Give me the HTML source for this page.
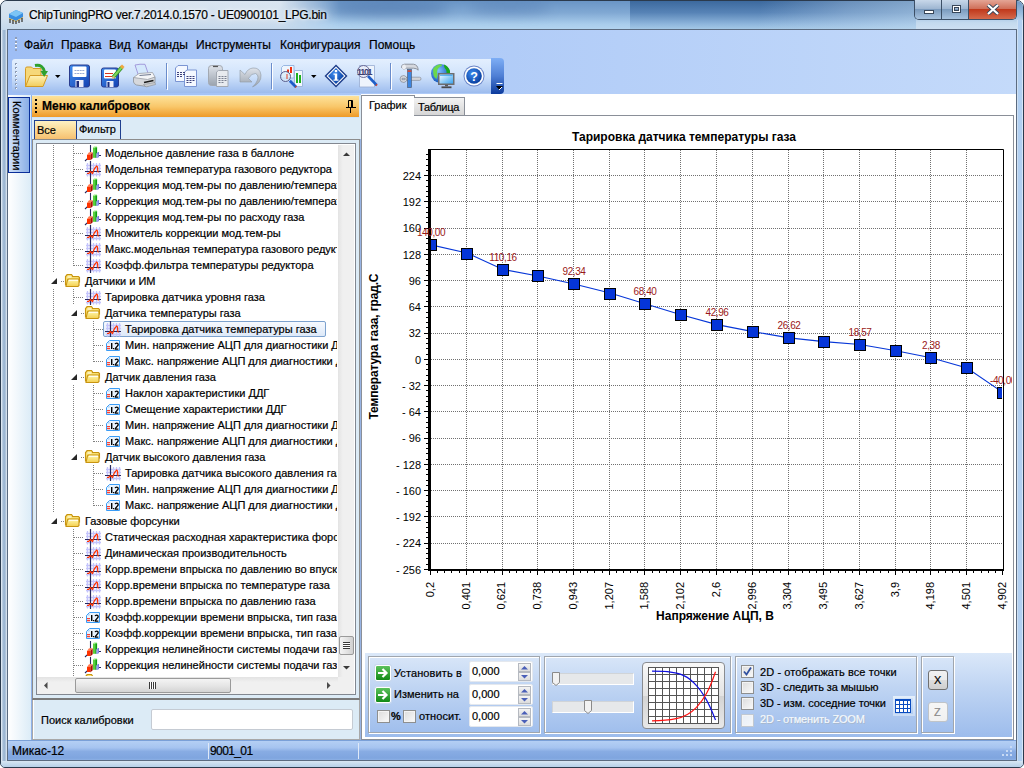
<!DOCTYPE html>
<html><head><meta charset="utf-8">
<style>
*{margin:0;padding:0;box-sizing:border-box}
html,body{width:1024px;height:768px;overflow:hidden;background:#fff}
body{position:relative;font-family:"Liberation Sans",sans-serif;font-size:11px;color:#000}
.a{position:absolute}
.t{position:absolute;white-space:nowrap;line-height:1;-webkit-text-stroke:0.2px currentColor}
</style></head><body>
<!-- window frame -->
<div class="a" style="left:0;top:0;width:1024px;height:768px;background:#bcd3ea;border:1px solid #2b3a4d;border-radius:7px 7px 5px 5px;overflow:hidden"></div>
<div class="a" style="left:1px;top:1px;width:1022px;height:29px;border-radius:6px 6px 0 0;background:linear-gradient(180deg,#dae5f0 0,#d2e0ee 60%,#c4d8ec 100%)"></div>
<div class="a" style="left:280px;top:1px;width:360px;height:29px;background:linear-gradient(180deg,#6a95c6 0,#80a8d3 40%,#a9cdec 80%,#b4d5f0 100%);-webkit-mask-image:linear-gradient(90deg,transparent 0,#000 60px);mask-image:linear-gradient(90deg,transparent 0,#000 60px)"></div>
<div class="a" style="left:330px;top:1px;width:120px;height:16px;border-radius:50%;background:rgba(50,90,150,.35);filter:blur(6px)"></div>
<div class="a" style="left:470px;top:1px;width:80px;height:14px;border-radius:50%;background:rgba(60,100,160,.25);filter:blur(6px)"></div>
<div class="a" style="left:630px;top:1px;width:286px;height:29px;background:linear-gradient(180deg,#3c699e 0,#5783b6 40%,#8fb6dc 80%,#a8cbe8 100%)"></div>
<div class="a" style="left:630px;top:1px;width:286px;height:29px;background:linear-gradient(100deg,rgba(255,255,255,0) 0,rgba(255,255,255,0) 45%,rgba(190,215,240,.35) 75%,rgba(200,225,245,.5) 100%)"></div>
<div class="a" style="left:916px;top:1px;width:107px;height:29px;border-radius:0 6px 0 0;background:linear-gradient(180deg,#6f97c4 0,#9dbfe0 45%,#c4daee 75%,#cfe1f2 100%)"></div>
<div class="a" style="left:1px;top:30px;width:6px;height:731px;background:linear-gradient(90deg,#eef4fa 0,#a4bcd6 35%,#9cb6d2 65%,#e6eef6 100%)"></div>
<div class="a" style="left:1017px;top:20px;width:6px;height:741px;background:linear-gradient(90deg,#dce8f4,#b2d0f2 25%,#b2d0f2 80%,#eef6fd)"></div>
<div class="a" style="left:1px;top:761px;width:1022px;height:6px;border-radius:0 0 4px 4px;background:linear-gradient(180deg,#d8e6f3,#c6dbee 50%,#b8d0e8)"></div>
<!-- app icon -->
<svg class="a" style="left:7px;top:8px" width="18" height="16" viewBox="0 0 18 16">
<path d="M2 6 L9 2 L16 5 L16 9 L9 13 L2 10 Z" fill="#3a8ee0"/>
<path d="M2 6 L9 2 L16 5 L9 9 Z" fill="#7cc4f5"/>
<path d="M2 10 L9 13 L16 9 L16 10 L9 14 L2 11Z" fill="#e9b23a"/>
<path d="M3 11v4M6 12v4M9 13v3M12 12v3M15 10v4" stroke="#3b3b3b" stroke-width="1.3"/>
</svg>
<div class="t" style="left:29px;top:9px;font-size:12px;color:#000;letter-spacing:-0.25px;text-shadow:0 0 6px #fff,0 0 3px #fff">ChipTuningPRO ver.7.2014.0.1570 - UE0900101_LPG.bin</div>
<!-- caption buttons -->
<div class="a" style="left:914px;top:0;width:103px;height:20px;border:1px solid #3c4f66;border-top:none;border-radius:0 0 5px 5px;overflow:hidden">
 <div class="a" style="left:0;top:0;width:27px;height:19px;background:linear-gradient(180deg,#c8d8ea 0,#9fb7d2 45%,#7b9bbe 50%,#a8c3df 100%);border-right:1px solid #3c4f66"></div>
 <div class="a" style="left:27px;top:0;width:27px;height:19px;background:linear-gradient(180deg,#c8d8ea 0,#9fb7d2 45%,#7b9bbe 50%,#a8c3df 100%);border-right:1px solid #3c4f66"></div>
 <div class="a" style="left:54px;top:0;width:48px;height:19px;background:linear-gradient(180deg,#e4a595 0,#d0705a 45%,#c0391c 50%,#d56a4c 100%)"></div>
 <div class="a" style="left:9px;top:10px;width:10px;height:4px;background:#fff;border:1px solid #39475a"></div>
 <div class="a" style="left:37px;top:5px;width:9px;height:8px;background:transparent;border:1px solid #39475a;box-shadow:inset 0 0 0 1px #fff, inset 0 0 0 2px #39475a"></div>
 <svg class="a" style="left:71px;top:4px" width="14" height="11" viewBox="0 0 14 11"><path d="M2 1 L12 10 M12 1 L2 10" stroke="#39475a" stroke-width="4"/><path d="M2 1 L12 10 M12 1 L2 10" stroke="#fff" stroke-width="2.2"/></svg>
</div>
<!-- client -->
<div class="a" style="left:7px;top:29px;width:1010px;height:732px;border:1px solid #5b6b80;background:#dfecf7"></div>
<!-- menu+toolbar panel -->
<div class="a" style="left:8px;top:30px;width:1008px;height:65px;background:linear-gradient(90deg,#9ebef5,#c4dafa)"></div>
<div class="a" style="left:15px;top:37px;width:2px;height:14px;background:repeating-linear-gradient(180deg,#8e9db8 0,#8e9db8 2px,#fff 2px,#fff 3px,transparent 3px,transparent 4px)"></div>
<div class="t" style="left:24px;top:39px;font-size:12px">Файл</div>
<div class="t" style="left:61px;top:39px;font-size:12px">Правка</div>
<div class="t" style="left:109px;top:39px;font-size:12px">Вид</div>
<div class="t" style="left:137px;top:39px;font-size:12px">Команды</div>
<div class="t" style="left:196px;top:39px;font-size:12px">Инструменты</div>
<div class="t" style="left:280px;top:39px;font-size:12px">Конфигурация</div>
<div class="t" style="left:369px;top:39px;font-size:12px">Помощь</div>
<svg class="a" style="left:0;top:0" width="520" height="100" viewBox="0 0 520 100">
<defs>
<linearGradient id="tbg" x1="0" y1="0" x2="0" y2="1"><stop offset="0" stop-color="#e3effe"/><stop offset=".5" stop-color="#cfe2fb"/><stop offset="1" stop-color="#9dbcee"/></linearGradient>
<linearGradient id="ovg" x1="0" y1="0" x2="0" y2="1"><stop offset="0" stop-color="#7eaef5"/><stop offset=".5" stop-color="#4f7fd5"/><stop offset="1" stop-color="#0b3a9c"/></linearGradient>
<linearGradient id="flp" x1="0" y1="0" x2="1" y2="1"><stop offset="0" stop-color="#3f8ef0"/><stop offset="1" stop-color="#1440b0"/></linearGradient>
<linearGradient id="fold" x1="0" y1="0" x2="0" y2="1"><stop offset="0" stop-color="#fff3b8"/><stop offset="1" stop-color="#f2cd5c"/></linearGradient>
<linearGradient id="gray" x1="0" y1="0" x2="0" y2="1"><stop offset="0" stop-color="#dfe3ea"/><stop offset="1" stop-color="#9aa3ae"/></linearGradient>
<radialGradient id="hb" cx=".4" cy=".35" r=".7"><stop offset="0" stop-color="#3c8cf0"/><stop offset="1" stop-color="#063a9a"/></radialGradient>
<radialGradient id="gl" cx=".4" cy=".35" r=".7"><stop offset="0" stop-color="#7fc0ff"/><stop offset="1" stop-color="#0b4fb5"/></radialGradient>
</defs>
<rect x="12" y="59" width="482" height="34" rx="3" fill="url(#tbg)"/>
<path d="M491 58 H500 Q504 58 504 62 V90 Q504 94 500 94 H491 Z" fill="url(#ovg)"/>
<path d="M496.5 83.5h6" stroke="#fff" stroke-width="1"/><path d="M496 86h7l-3.5 4z" fill="#000"/><path d="M499 90l3-3" stroke="#fff" stroke-width="1"/>
<g fill="#8c9bb5"><rect x="15" y="63" width="2" height="2"/><rect x="15" y="67" width="2" height="2"/><rect x="15" y="71" width="2" height="2"/><rect x="15" y="75" width="2" height="2"/><rect x="15" y="79" width="2" height="2"/><rect x="15" y="83" width="2" height="2"/><rect x="15" y="87" width="2" height="2"/></g>
<g fill="#fff"><rect x="16" y="64" width="1" height="1"/><rect x="16" y="68" width="1" height="1"/><rect x="16" y="72" width="1" height="1"/><rect x="16" y="76" width="1" height="1"/><rect x="16" y="80" width="1" height="1"/><rect x="16" y="84" width="1" height="1"/><rect x="16" y="88" width="1" height="1"/></g>
<!-- open folder -->
<path d="M25.5 86.5 V68.5 Q25.5 67 27 67 H31.5 L33 68.5 H41 V75 Z" fill="#f6d87a" stroke="#d49b25" stroke-width="1"/>
<path d="M25.5 86.5 L30 75.5 H47.5 L43 86.5 Z" fill="url(#fold)" stroke="#d49b25" stroke-width="1"/>
<path d="M35 65.5 Q43 64 44.5 72" fill="none" stroke="#2fa12f" stroke-width="3"/>
<path d="M40.5 71 H48 L44.2 77 Z" fill="#2fa12f"/>
<path d="M55 75 h5.5 l-2.75 3 z" fill="#000"/>
<!-- save -->
<rect x="69.5" y="65" width="20" height="22" rx="2" fill="url(#flp)" stroke="#2a3c8e"/>
<rect x="72.5" y="66.5" width="14" height="10.5" rx="1" fill="#fff"/>
<path d="M74.5 70.5h10M74.5 73.5h10" stroke="#7d96cc" stroke-width=".8" stroke-dasharray="2 .6"/>
<rect x="75.5" y="80" width="8" height="7" fill="#eceefa"/><rect x="76.5" y="81" width="2.5" height="6" fill="#1c2c7c"/>
<!-- save edit -->
<rect x="101.5" y="68" width="17" height="19" rx="2" fill="url(#flp)" stroke="#2a3c8e"/>
<rect x="104" y="69.5" width="12" height="9" rx="1" fill="#fff"/>
<path d="M105 73.5h8M105 76.5h8" stroke="#d8341c" stroke-width="1.2"/>
<rect x="106.5" y="81" width="7" height="6" fill="#eceefa"/><rect x="107.5" y="82" width="2" height="5" fill="#1c2c7c"/>
<path d="M113 77.5 L122 67" stroke="#2e8f23" stroke-width="3.6"/><path d="M113 77.5 L122 67" stroke="#7fd65a" stroke-width="2"/>
<path d="M121 65.5 l2.5 2.5" stroke="#f0a640" stroke-width="3"/>
<path d="M111.5 79 l1.5-3 2 1.8z" fill="#e8b070"/>
<!-- printer -->
<path d="M135 65 Q140 63.8 145 64.3 L148.5 74.5 L138.5 75.5 Z" fill="#d4e8fc" stroke="#9d92d8" stroke-width=".9"/>
<path d="M133.5 77.5 V82 Q134 84 136.5 85 L147 86.5 L155 82.5 V77 Z" fill="#d6d8dc" stroke="#8c9096" stroke-width=".8"/>
<path d="M133.5 77.5 L139 73.5 L152.5 72.5 L155 77 L147.5 79.5 Z" fill="#f4f5f7" stroke="#9a9ea4" stroke-width=".8"/>
<path d="M139.5 75.5 L151 74.5" stroke="#6f7a90" stroke-width="1"/>
<path d="M144 82.5 L153.5 80.5" stroke="#1a1a1a" stroke-width="1.6"/>
<path d="M143.5 84.5 L155 82.5 L155.5 84.5 L146 87 Z" fill="#c9cbcf" stroke="#8c9096" stroke-width=".6"/>
<!-- separators -->
<path d="M166.5 63v26M271.5 63v26M390.5 63v26" stroke="#6a8ccb" stroke-width="1"/>
<path d="M167.5 64v26M272.5 64v26M391.5 64v26" stroke="#fff" stroke-width="1"/>
<!-- copy -->
<path d="M175.5 81.5 V68 L178 65.5 H187.5 V81.5 Z" fill="#f4f8ff" stroke="#7b95d3"/>
<path d="M184.5 86.5 V72 L187 70 H196.5 V86.5 Z" fill="#f4f8ff" stroke="#7b95d3"/>
<path d="M177 72.5h8M177 74.5h8M177 76.5h6M186.5 76.5h8M186.5 78.5h8M186.5 80.5h8M186.5 82.5h6" stroke="#3a3f7a" stroke-width="1" stroke-dasharray="2 1"/>
<!-- paste gray -->
<rect x="208.5" y="65.5" width="14" height="20" rx="3" fill="url(#gray)" stroke="#a3a9b2"/>
<path d="M213 66.5h5" stroke="#555" stroke-width="1.2"/>
<path d="M216.5 86.5 V72 L218.5 70.5 H228 V86.5 Z" fill="#e8ebef" stroke="#a3a9b2"/>
<path d="M218.5 76.5h8M218.5 78.5h8M218.5 80.5h8M218.5 82.5h6" stroke="#7b8190" stroke-width="1" stroke-dasharray="2 1"/>
<!-- undo gray -->
<path d="M240 70 L240 82 L252 82 L248.5 78.5 Q251.5 73 255.5 73.5 Q259 75 257.5 80 Q256 84 252.5 87 Q261.5 83 261 75 Q260 67.5 253 68 Q247.5 68.5 245 74.5 Z" fill="url(#gray)" stroke="#8f98a3" stroke-width=".6"/>
<!-- chart zoom -->
<path d="M281.5 78 V67.5 L283.5 65.5 H294 V78 Z" fill="#eef5fd" stroke="#8fb0e0" stroke-width=".9"/>
<path d="M288 73v-3.5M291 73v-6" stroke="#f03010" stroke-width="2"/>
<path d="M294.5 86.5 V70.5 H302.5 V86.5 Z" fill="#f2f8fe" stroke="#98b0d8" stroke-width=".9"/>
<path d="M297 83v-10M300 83v-8" stroke="#20b020" stroke-width="2"/>
<circle cx="285.5" cy="76.5" r="5" fill="rgba(215,235,250,.75)" stroke="#5a5c8a" stroke-width="1"/>
<path d="M287 74v5" stroke="#e07060" stroke-width="2" opacity=".7"/>
<path d="M289.8 80.8 L296 87" stroke="#1d5cc8" stroke-width="2.8"/><path d="M295.5 86.5l.8.8" stroke="#d04020" stroke-width="2"/>
<path d="M311 75 h5.5 l-2.75 3 z" fill="#000"/>
<!-- info -->
<path d="M336 64.5 L347.5 76 L336 87.5 L324.5 76 Z" fill="#1d3d8a"/>
<path d="M336 66.5 L345.5 76 L336 85.5 L326.5 76 Z" fill="#fff"/>
<path d="M336 68 L344 76 L336 84 L328 76 Z" fill="url(#hb)"/>
<rect x="334.8" y="70" width="2.4" height="2.2" fill="#fff"/><path d="M333.5 73.5h3.7v6h1.3v1.2h-5v-1.2h1.3v-4.8h-1.3z" fill="#fff"/>
<!-- binary search -->
<path d="M359.5 87 V65.5 H374.5 V87 Z" fill="#eef4fc" stroke="#98acd2" stroke-width=".8"/>
<circle cx="363.5" cy="71.5" r="6" fill="rgba(230,235,248,.85)" stroke="#6a6c98" stroke-width="1"/>
<text x="357" y="75" font-family="Liberation Sans" font-size="9" font-weight="bold" fill="#3d4070" letter-spacing="-1.3">1101</text>
<path d="M368 76 L376.5 85" stroke="#1f5fc8" stroke-width="2.6"/><path d="M376 84.5 l1 1" stroke="#d0412a" stroke-width="2"/>
<!-- tools -->
<path d="M400 79 Q400 75.5 404 75.5 L406.5 77 V81 L404 82.5 Q400 82.5 400 79Z M402 78.3 h3 v1.4 h-3z" fill="#d9dbe0" stroke="#80858f" stroke-width=".7" fill-rule="evenodd"/>
<rect x="406" y="77.2" width="15" height="3.2" rx="1.5" fill="#d2d4da" stroke="#80858f" stroke-width=".6"/>
<rect x="407.6" y="69.5" width="3.8" height="18" fill="#3d86e0" stroke="#4d5d78" stroke-width=".7"/>
<rect x="407.6" y="70.3" width="3.8" height="1.5" fill="#e8401c"/>
<path d="M401.5 67.5 Q401 64.5 404.5 64.2 H413.5 Q418 64.8 418.2 70.2 Q416.5 68.2 413.5 68.2 H406.5 Q403.5 70.5 401.5 67.5Z" fill="#d5d8de" stroke="#7c818b" stroke-width=".8"/>
<ellipse cx="404" cy="67" rx="2" ry="2.6" fill="#eceef2"/>
<!-- globe -->
<circle cx="440.5" cy="73.5" r="9.5" fill="url(#gl)"/>
<path d="M433 69 Q435.5 65 440.5 64.2 Q443 64.3 441.5 66 Q438.5 67 437.5 69.5 Q436.5 72 437.5 75 L436.5 79 Q434 77.5 433.5 75 Z" fill="#6cd84a"/>
<path d="M444 64.6 Q448.5 66.5 450 71 L450 74 L446.5 74 Q447 70 445 68.5 Q444 67 444 64.6Z" fill="#1aa81a"/>
<rect x="438" y="73" width="16.5" height="12" fill="#6e6e70"/>
<linearGradient id="scr" x1="0" y1="0" x2="1" y2="1"><stop offset="0" stop-color="#f4fbff"/><stop offset="1" stop-color="#3aa4f0"/></linearGradient>
<rect x="439.5" y="74.5" width="13.5" height="9" fill="url(#scr)"/>
<path d="M440 75.2h12.5" stroke="#30a0f0" stroke-width="1"/>
<path d="M445 85.5h3" stroke="#5a5a5c" stroke-width="1.5"/><path d="M441.5 87.3h10" stroke="#4a4a4c" stroke-width="1.8"/>
<!-- help -->
<circle cx="474" cy="76" r="10.5" fill="#6b86c8"/>
<circle cx="474" cy="76" r="9.5" fill="#fff"/>
<circle cx="474" cy="76" r="7.8" fill="url(#hb)"/>
<text x="474" y="80.8" font-family="Liberation Sans" font-size="12.5" font-weight="bold" fill="#fff" text-anchor="middle">?</text>
</svg>
<!-- left dock -->
<div class="a" style="left:8px;top:95px;width:23px;height:645px;background:linear-gradient(90deg,#ffffff,#dcecf7)"></div>
<div class="a" style="left:31px;top:95px;width:1px;height:645px;background:#8fb2ea"></div>
<div class="a" style="left:8px;top:97px;width:22px;height:76px;border:1px solid #0a2f9a;background:linear-gradient(90deg,#cfe0f8,#8aaee6)"></div>
<div class="t" style="left:22px;top:101px;font-size:11px;transform-origin:0 0;transform:rotate(90deg);">Комментарии</div>
<div class="a" style="left:32px;top:95px;width:329px;height:645px;background:#dcebf6"></div><div class="a" style="left:32px;top:117px;width:327px;height:1px;background:#cfe5fb"></div>
<div class="a" style="left:32px;top:96px;width:327px;height:21px;background:linear-gradient(180deg,#fde29a 0,#f9c76a 50%,#ee9a27 100%)"></div>
<div class="a" style="left:35px;top:99px;width:2px;height:15px;background:repeating-linear-gradient(180deg,#000 0,#000 2px,transparent 2px,transparent 4px)"></div>
<div class="t" style="left:42px;top:100px;font-size:12px;font-weight:bold">Меню калибровок</div>
<svg class="a" style="left:345px;top:99px" width="12" height="14" viewBox="0 0 12 14"><path d="M3.5 1.5h4v7h-4zM1 8.5h10M5.5 9v5" fill="none" stroke="#000" stroke-width="1"/><path d="M6.5 2v6" stroke="#000" stroke-width="1"/></svg>
<div class="a" style="left:34px;top:120px;width:42px;height:19px;border:1px solid #1f3f8f;border-right:none;border-bottom:none;background:linear-gradient(180deg,#fdf1c4 0,#fbdb96 50%,#f6c070 100%)"></div>
<div class="a" style="left:76px;top:120px;width:45px;height:20px;border:1px solid #1f3f8f;background:#dcebf6"></div>
<div class="t" style="left:37px;top:125px">Все</div>
<div class="t" style="left:79px;top:124px">Фильтр</div>
<div class="a" style="left:32px;top:139px;width:328px;height:561px;border:1px solid #8c8c8c;border-bottom:2px solid #7a7a7a;background:#dcebf6"></div>
<div class="a" style="left:32px;top:700px;width:328px;height:40px;border:1px solid #a8a8a8;border-top:none;box-shadow:inset 1px 0 0 #fff"></div>
<div class="a" style="left:36px;top:143px;width:320px;height:552px;border:1px solid #828790;background:#fff;overflow:hidden">
 <div class="a" style="left:-37px;top:-144px;width:337px;height:676px;overflow:hidden">
  <div class="a" style="left:0;top:0;width:337px;height:676px">
<div class="t" style="left:105px;top:148px">Модельное давление газа в баллоне</div>
<div class="t" style="left:105px;top:164px">Модельная температура газового редуктора</div>
<div class="t" style="left:105px;top:180px">Коррекция мод.тем-ры по давлению/температуре газа</div>
<div class="t" style="left:105px;top:196px">Коррекция мод.тем-ры по давлению/температуре газа</div>
<div class="t" style="left:105px;top:212px">Коррекция мод.тем-ры по расходу газа</div>
<div class="t" style="left:105px;top:228px">Множитель коррекции мод.тем-ры</div>
<div class="t" style="left:105px;top:244px">Макс.модельная температура газового редуктора</div>
<div class="t" style="left:105px;top:260px">Коэфф.фильтра температуры редуктора</div>
<div class="t" style="left:85px;top:276px">Датчики и ИМ</div>
<div class="t" style="left:105px;top:292px">Тарировка датчика уровня газа</div>
<div class="t" style="left:105px;top:308px">Датчика температуры газа</div>
<div class="a" style="left:103px;top:321px;width:223px;height:16px;border:1px solid #7da2ce;border-radius:2px;background:linear-gradient(180deg,#f6f9fe,#dde9f8)"></div>
<div class="t" style="left:125px;top:324px">Тарировка датчика температуры газа</div>
<div class="t" style="left:125px;top:340px">Мин. напряжение АЦП для диагностики ДТГ</div>
<div class="t" style="left:125px;top:356px">Макс. напряжение АЦП для диагностики ДТГ</div>
<div class="t" style="left:105px;top:372px">Датчик давления газа</div>
<div class="t" style="left:125px;top:388px">Наклон характеристики ДДГ</div>
<div class="t" style="left:125px;top:404px">Смещение характеристики ДДГ</div>
<div class="t" style="left:125px;top:420px">Мин. напряжение АЦП для диагностики ДДГ</div>
<div class="t" style="left:125px;top:436px">Макс. напряжение АЦП для диагностики ДДГ</div>
<div class="t" style="left:105px;top:452px">Датчик высокого давления газа</div>
<div class="t" style="left:125px;top:468px">Тарировка датчика высокого давления газа</div>
<div class="t" style="left:125px;top:484px">Мин. напряжение АЦП для диагностики ДВДГ</div>
<div class="t" style="left:125px;top:500px">Макс. напряжение АЦП для диагностики ДВДГ</div>
<div class="t" style="left:85px;top:516px">Газовые форсунки</div>
<div class="t" style="left:105px;top:532px">Статическая расходная характеристика форсунок</div>
<div class="t" style="left:105px;top:548px">Динамическая производительность</div>
<div class="t" style="left:105px;top:564px">Корр.времени впрыска по давлению во впускном коллекторе</div>
<div class="t" style="left:105px;top:580px">Корр.времени впрыска по температуре газа</div>
<div class="t" style="left:105px;top:596px">Корр.времени впрыска по давлению газа</div>
<div class="t" style="left:105px;top:612px">Коэфф.коррекции времени впрыска, тип газа 1</div>
<div class="t" style="left:105px;top:628px">Коэфф.коррекции времени впрыска, тип газа 2</div>
<div class="t" style="left:105px;top:644px">Коррекция нелинейности системы подачи газа</div>
<div class="t" style="left:105px;top:660px">Коррекция нелинейности системы подачи газа</div>
<div class="t" style="left:105px;top:676px">Х</div>
  </div>
  <svg class="a" style="left:0;top:0" width="337" height="676">
<defs>
<symbol id="ib" viewBox="0 0 16 16" width="16" height="16" overflow="visible">
<path d="M4.5 0v7.5M12.5 10.5h2.5M-1 16l2.2-2.2" stroke="#26285e" stroke-width="1.1"/>
<path d="M1 10l2-2.8h3.7l-2.4 2.8z" fill="#ff7a50"/>
<path d="M4.3 10l2.4-2.8v6l-2.4 2.2z" fill="#a80c00"/>
<rect x="1" y="10" width="3.3" height="5" fill="#ff3300"/>
<rect x="7" y="2.5" width="2.2" height="10.3" fill="#5ad23a"/>
<rect x="9.2" y="2" width="1.9" height="10.8" fill="#0ea010"/>
<path d="M7 2.5l1-1h3v1z" fill="#9af080"/>
<path d="M10.5 8.5l1.5-1.5h1v5l-1.5 1h-1z" fill="#7b80e0"/>
<rect x="10.5" y="8.5" width="1" height="4.5" fill="#c0c4ff"/>
</symbol>
<symbol id="ic" viewBox="0 0 16 16" width="16" height="16" overflow="visible">
<path d="M1.5 2v13.5M7.5 2v13.5M10.5 2v13.5M13.5 2v13.5M0 4.5h15M0 7.5h15M0 13.5h15" stroke="#c4c4fc" stroke-width="1.3"/>
<path d="M4.5 0v16M-1 10.5h16" stroke="#262860" stroke-width="1.2"/>
<path d="M1 12.5h1.5l2-2 2 2 1-2.5 1-2.5 1-1 1-1.5 1 1 .3 4.5 .7 1" fill="none" stroke="#ff3300" stroke-width="1.2" stroke-linejoin="round"/>
</symbol>
<symbol id="in" viewBox="0 0 16 16" width="16" height="16" overflow="visible">
<path d="M0.5 6.5l3-3h10v10h-13z" fill="#eaf4fe" stroke="#3a9cf6" stroke-width="1"/>
<path d="M1.5 6.5l2-2v2z" fill="#9cc8f4"/>
<path d="M1 9.7h3M1 11.7h3" stroke="#ff1800" stroke-width="1"/>
<rect x="5" y="6" width="1.4" height="6" fill="#000"/>
<rect x="7" y="11" width="1.2" height="1.2" fill="#000"/>
<path d="M9.1 7.2q.3-1.1 1.5-1.1q1.6 0 1.6 1.5q0 .9-1 1.7l-1.8 2.1v.7h3" fill="none" stroke="#000" stroke-width="1.3"/>
</symbol>
<linearGradient id="fg" x1="0" y1="0" x2="0" y2="1"><stop offset="0" stop-color="#fff8b0"/><stop offset="1" stop-color="#f4d050"/></linearGradient>
<symbol id="if" viewBox="0 0 16 16" width="16" height="16" overflow="visible">
<path d="M0.5 12.5V3.5L2 2V1.5h4.5L7.5 3v.5h6l1 1v5" fill="#f8e070" stroke="#c89410" stroke-width="1.1"/>
<path d="M1 13.5L2.5 7q.3-1 1.5-1h9.5l.5.5v6l-1 1z" fill="url(#fg)" stroke="#c89410" stroke-width="1.1"/>
<path d="M2.5 4h4M4 7.3h9" stroke="#fff" stroke-width="1"/>
</symbol>
</defs>
<path d="M53.5 145V273" stroke="#808080" stroke-dasharray="1 1"/>
<path d="M53.5 289V513" stroke="#808080" stroke-dasharray="1 1"/>
<path d="M73.5 145V266" stroke="#808080" stroke-dasharray="1 1"/>
<path d="M73.5 289V305" stroke="#808080" stroke-dasharray="1 1"/>
<path d="M73.5 321V369" stroke="#808080" stroke-dasharray="1 1"/>
<path d="M73.5 385V449" stroke="#808080" stroke-dasharray="1 1"/>
<path d="M73.5 529V690" stroke="#808080" stroke-dasharray="1 1"/>
<path d="M93.5 321V362" stroke="#808080" stroke-dasharray="1 1"/>
<path d="M93.5 385V442" stroke="#808080" stroke-dasharray="1 1"/>
<path d="M93.5 465V506" stroke="#808080" stroke-dasharray="1 1"/>
<use href="#ib" x="86" y="145"/>
<path d="M74 153.5h10" stroke="#808080" stroke-dasharray="1 1"/>
<use href="#ic" x="86" y="161"/>
<path d="M74 169.5h10" stroke="#808080" stroke-dasharray="1 1"/>
<use href="#ib" x="86" y="177"/>
<path d="M74 185.5h10" stroke="#808080" stroke-dasharray="1 1"/>
<use href="#ib" x="86" y="193"/>
<path d="M74 201.5h10" stroke="#808080" stroke-dasharray="1 1"/>
<use href="#ib" x="86" y="209"/>
<path d="M74 217.5h10" stroke="#808080" stroke-dasharray="1 1"/>
<use href="#ic" x="86" y="225"/>
<path d="M74 233.5h10" stroke="#808080" stroke-dasharray="1 1"/>
<use href="#ic" x="86" y="241"/>
<path d="M74 249.5h10" stroke="#808080" stroke-dasharray="1 1"/>
<use href="#ic" x="86" y="257"/>
<path d="M74 265.5h10" stroke="#808080" stroke-dasharray="1 1"/>
<use href="#if" x="65" y="273"/>
<path d="M57 278v6h-6z" fill="#262626"/>
<path d="M61 281.5h4" stroke="#808080" stroke-dasharray="1 1"/>
<use href="#ic" x="86" y="289"/>
<path d="M74 297.5h10" stroke="#808080" stroke-dasharray="1 1"/>
<use href="#if" x="85" y="305"/>
<path d="M77 310v6h-6z" fill="#262626"/>
<path d="M81 313.5h4" stroke="#808080" stroke-dasharray="1 1"/>
<use href="#ic" x="106" y="321"/>
<path d="M94 329.5h10" stroke="#808080" stroke-dasharray="1 1"/>
<use href="#in" x="106" y="337"/>
<path d="M94 345.5h10" stroke="#808080" stroke-dasharray="1 1"/>
<use href="#in" x="106" y="353"/>
<path d="M94 361.5h10" stroke="#808080" stroke-dasharray="1 1"/>
<use href="#if" x="85" y="369"/>
<path d="M77 374v6h-6z" fill="#262626"/>
<path d="M81 377.5h4" stroke="#808080" stroke-dasharray="1 1"/>
<use href="#in" x="106" y="385"/>
<path d="M94 393.5h10" stroke="#808080" stroke-dasharray="1 1"/>
<use href="#in" x="106" y="401"/>
<path d="M94 409.5h10" stroke="#808080" stroke-dasharray="1 1"/>
<use href="#in" x="106" y="417"/>
<path d="M94 425.5h10" stroke="#808080" stroke-dasharray="1 1"/>
<use href="#in" x="106" y="433"/>
<path d="M94 441.5h10" stroke="#808080" stroke-dasharray="1 1"/>
<use href="#if" x="85" y="449"/>
<path d="M77 454v6h-6z" fill="#262626"/>
<path d="M81 457.5h4" stroke="#808080" stroke-dasharray="1 1"/>
<use href="#ic" x="106" y="465"/>
<path d="M94 473.5h10" stroke="#808080" stroke-dasharray="1 1"/>
<use href="#in" x="106" y="481"/>
<path d="M94 489.5h10" stroke="#808080" stroke-dasharray="1 1"/>
<use href="#in" x="106" y="497"/>
<path d="M94 505.5h10" stroke="#808080" stroke-dasharray="1 1"/>
<use href="#if" x="65" y="513"/>
<path d="M57 518v6h-6z" fill="#262626"/>
<path d="M61 521.5h4" stroke="#808080" stroke-dasharray="1 1"/>
<use href="#ic" x="86" y="529"/>
<path d="M74 537.5h10" stroke="#808080" stroke-dasharray="1 1"/>
<use href="#ic" x="86" y="545"/>
<path d="M74 553.5h10" stroke="#808080" stroke-dasharray="1 1"/>
<use href="#ic" x="86" y="561"/>
<path d="M74 569.5h10" stroke="#808080" stroke-dasharray="1 1"/>
<use href="#ic" x="86" y="577"/>
<path d="M74 585.5h10" stroke="#808080" stroke-dasharray="1 1"/>
<use href="#ic" x="86" y="593"/>
<path d="M74 601.5h10" stroke="#808080" stroke-dasharray="1 1"/>
<use href="#in" x="86" y="609"/>
<path d="M74 617.5h10" stroke="#808080" stroke-dasharray="1 1"/>
<use href="#in" x="86" y="625"/>
<path d="M74 633.5h10" stroke="#808080" stroke-dasharray="1 1"/>
<use href="#ib" x="86" y="641"/>
<path d="M74 649.5h10" stroke="#808080" stroke-dasharray="1 1"/>
<use href="#ib" x="86" y="657"/>
<path d="M74 665.5h10" stroke="#808080" stroke-dasharray="1 1"/>
<use href="#if" x="85" y="673"/>
<path d="M77 678v6h-6z" fill="#262626"/>
<path d="M81 681.5h4" stroke="#808080" stroke-dasharray="1 1"/>
  </svg>
 </div>
 <!-- v scroll -->
 <div class="a" style="left:301px;top:1px;width:16px;height:532px;background:linear-gradient(90deg,#e3e3e3,#f0f0f0 30%,#f0f0f0)"></div>
 <svg class="a" style="left:301px;top:0" width="17" height="533"><path d="M5 12l3.5-3.5 3.5 3.5z" fill="#3a3a3a"/><path d="M5 522l3.5 3.5 3.5-3.5z" fill="#3a3a3a"/></svg>
 <div class="a" style="left:302px;top:492px;width:15px;height:19px;border:1px solid #9a9a9a;border-radius:2px;background:linear-gradient(90deg,#f4f4f4,#e0e0e0 60%,#d0d0d0)"></div>
 <div class="a" style="left:306px;top:498px;width:7px;height:7px;background:repeating-linear-gradient(180deg,#3a3a3a 0,#3a3a3a 1px,#fff 1px,#fff 2px,transparent 2px, transparent 2px)"></div>
 <!-- h scroll -->
 <div class="a" style="left:0;top:533px;width:301px;height:17px;background:linear-gradient(180deg,#e3e3e3,#f0f0f0 30%,#f0f0f0)"></div>
 <div class="a" style="left:301px;top:533px;width:16px;height:17px;background:#f0f0f0"></div>
 <svg class="a" style="left:0;top:533px" width="301" height="17"><path d="M10.5 5v7l-3.5-3.5z" fill="#4a4a4a"/><path d="M290 5v7l3.5-3.5z" fill="#4a4a4a"/></svg>
 <div class="a" style="left:38px;top:534px;width:156px;height:15px;border:1px solid #9a9a9a;border-radius:2px;background:linear-gradient(180deg,#f4f4f4,#e6e6e6 50%,#d4d4d4)"></div>
 <div class="a" style="left:112px;top:538px;width:7px;height:7px;background:repeating-linear-gradient(90deg,#3a3a3a 0,#3a3a3a 1px,#fff 1px,#fff 2px)"></div>
</div>
<div class="t" style="left:41px;top:715px">Поиск калибровки</div>
<div class="a" style="left:360px;top:139px;width:1px;height:602px;background:#98b4e4"></div>
<div class="a" style="left:151px;top:709px;width:202px;height:21px;border:1px solid #c5cbd3;border-radius:2px;background:#fff"></div>
<!-- right -->
<div class="a" style="left:361px;top:94px;width:655px;height:646px;background:#fff"></div>

<div class="a" style="left:361px;top:95px;width:1px;height:645px;background:#8a8f98"></div>
<div class="a" style="left:361px;top:95px;width:54px;height:1px;background:#8a8f98"></div>
<div class="a" style="left:414px;top:95px;width:1px;height:21px;background:#8a8f98"></div>
<div class="a" style="left:414px;top:97px;width:51px;height:19px;border:1px solid #8a8f98;border-left:none;background:linear-gradient(180deg,#f3f3f3,#e4e4e4 50%,#d6d6d6)"></div>
<div class="a" style="left:414px;top:115px;width:600px;height:1px;background:#8a8f98"></div>
<div class="a" style="left:1013px;top:115px;width:1px;height:625px;background:#8a8f98"></div>
<div class="a" style="left:361px;top:739px;width:653px;height:1px;background:#8a8f98"></div>
<div class="t" style="left:369px;top:100px">График</div>
<div class="t" style="left:418px;top:102px;letter-spacing:-0.3px">Таблица</div>
<svg class="a" style="left:0;top:0" width="1024" height="768" viewBox="0 0 1024 768" font-family="Liberation Sans">
<defs><clipPath id="pc"><rect x="431" y="150" width="571" height="419"/></clipPath><clipPath id="rc"><rect x="362" y="116" width="650" height="536"/></clipPath></defs>
<g clip-path="url(#rc)">
<path d="M431 543.5H1003 M431 516.5H1003 M431 490.5H1003 M431 464.5H1003 M431 438.5H1003 M431 411.5H1003 M431 385.5H1003 M431 359.5H1003 M431 333.5H1003 M431 306.5H1003 M431 280.5H1003 M431 254.5H1003 M431 228.5H1003 M431 201.5H1003 M431 175.5H1003 M466.5 150V569 M502.5 150V569 M537.5 150V569 M573.5 150V569 M609.5 150V569 M644.5 150V569 M680.5 150V569 M716.5 150V569 M752.5 150V569 M788.5 150V569 M823.5 150V569 M859.5 150V569 M895.5 150V569 M930.5 150V569 M966.5 150V569" stroke="#707070" stroke-width="1" stroke-dasharray="1 1" fill="none"/>
<path d="M428 149.5H1003.5V570" stroke="#000" stroke-width="1" fill="none"/>
<rect x="428" y="149" width="3" height="422" fill="#000"/>
<rect x="428" y="569" width="576" height="2" fill="#000"/>
<path d="M424 569.5H428 M424 543.5H428 M424 516.5H428 M424 490.5H428 M424 464.5H428 M424 438.5H428 M424 411.5H428 M424 385.5H428 M424 359.5H428 M424 333.5H428 M424 306.5H428 M424 280.5H428 M424 254.5H428 M424 228.5H428 M424 201.5H428 M424 175.5H428 M426 564.5H428 M426 558.5H428 M426 553.5H428 M426 548.5H428 M426 537.5H428 M426 532.5H428 M426 527.5H428 M426 522.5H428 M426 511.5H428 M426 506.5H428 M426 501.5H428 M426 495.5H428 M426 485.5H428 M426 480.5H428 M426 474.5H428 M426 469.5H428 M426 459.5H428 M426 453.5H428 M426 448.5H428 M426 443.5H428 M426 432.5H428 M426 427.5H428 M426 422.5H428 M426 417.5H428 M426 406.5H428 M426 401.5H428 M426 396.5H428 M426 390.5H428 M426 380.5H428 M426 375.5H428 M426 369.5H428 M426 364.5H428 M426 354.5H428 M426 348.5H428 M426 343.5H428 M426 338.5H428 M426 327.5H428 M426 322.5H428 M426 317.5H428 M426 312.5H428 M426 301.5H428 M426 296.5H428 M426 291.5H428 M426 285.5H428 M426 275.5H428 M426 270.5H428 M426 264.5H428 M426 259.5H428 M426 249.5H428 M426 243.5H428 M426 238.5H428 M426 233.5H428 M426 222.5H428 M426 217.5H428 M426 212.5H428 M426 207.5H428 M426 196.5H428 M426 191.5H428 M426 186.5H428 M426 180.5H428 M426 170.5H428 M426 165.5H428 M426 159.5H428 M426 154.5H428 M430.5 571V575 M437.5 571V573 M444.5 571V573 M451.5 571V573 M459.5 571V573 M466.5 571V575 M473.5 571V573 M480.5 571V573 M487.5 571V573 M494.5 571V573 M502.5 571V575 M509.5 571V573 M516.5 571V573 M523.5 571V573 M530.5 571V573 M537.5 571V575 M544.5 571V573 M552.5 571V573 M559.5 571V573 M566.5 571V573 M573.5 571V575 M580.5 571V573 M587.5 571V573 M594.5 571V573 M602.5 571V573 M609.5 571V575 M616.5 571V573 M623.5 571V573 M630.5 571V573 M637.5 571V573 M644.5 571V575 M652.5 571V573 M659.5 571V573 M666.5 571V573 M673.5 571V573 M680.5 571V575 M687.5 571V573 M695.5 571V573 M702.5 571V573 M709.5 571V573 M716.5 571V575 M723.5 571V573 M730.5 571V573 M737.5 571V573 M745.5 571V573 M752.5 571V575 M759.5 571V573 M766.5 571V573 M773.5 571V573 M780.5 571V573 M788.5 571V575 M795.5 571V573 M802.5 571V573 M809.5 571V573 M816.5 571V573 M823.5 571V575 M830.5 571V573 M838.5 571V573 M845.5 571V573 M852.5 571V573 M859.5 571V575 M866.5 571V573 M873.5 571V573 M880.5 571V573 M888.5 571V573 M895.5 571V575 M902.5 571V573 M909.5 571V573 M916.5 571V573 M923.5 571V573 M930.5 571V575 M938.5 571V573 M945.5 571V573 M952.5 571V573 M959.5 571V573 M966.5 571V575 M973.5 571V573 M981.5 571V573 M988.5 571V573 M995.5 571V573 M1002.5 571V575" stroke="#000" stroke-width="1" fill="none"/>
<text x="421" y="573.5" font-size="11" text-anchor="end">- 256</text>
<text x="421" y="547.2" font-size="11" text-anchor="end">- 224</text>
<text x="421" y="521.0" font-size="11" text-anchor="end">- 192</text>
<text x="421" y="494.8" font-size="11" text-anchor="end">- 160</text>
<text x="421" y="468.5" font-size="11" text-anchor="end">- 128</text>
<text x="421" y="442.2" font-size="11" text-anchor="end">- 96</text>
<text x="421" y="416.0" font-size="11" text-anchor="end">- 64</text>
<text x="421" y="389.8" font-size="11" text-anchor="end">- 32</text>
<text x="421" y="363.5" font-size="11" text-anchor="end">0</text>
<text x="421" y="337.2" font-size="11" text-anchor="end">32</text>
<text x="421" y="311.0" font-size="11" text-anchor="end">64</text>
<text x="421" y="284.8" font-size="11" text-anchor="end">96</text>
<text x="421" y="258.5" font-size="11" text-anchor="end">128</text>
<text x="421" y="232.2" font-size="11" text-anchor="end">160</text>
<text x="421" y="206.0" font-size="11" text-anchor="end">192</text>
<text x="421" y="179.8" font-size="11" text-anchor="end">224</text>
<text transform="translate(433.8,582) rotate(-90)" font-size="11" text-anchor="end">0,2</text>
<text transform="translate(469.6,582) rotate(-90)" font-size="11" text-anchor="end">0,401</text>
<text transform="translate(505.3,582) rotate(-90)" font-size="11" text-anchor="end">0,621</text>
<text transform="translate(541.0,582) rotate(-90)" font-size="11" text-anchor="end">0,738</text>
<text transform="translate(576.8,582) rotate(-90)" font-size="11" text-anchor="end">0,943</text>
<text transform="translate(612.5,582) rotate(-90)" font-size="11" text-anchor="end">1,207</text>
<text transform="translate(648.3,582) rotate(-90)" font-size="11" text-anchor="end">1,588</text>
<text transform="translate(684.0,582) rotate(-90)" font-size="11" text-anchor="end">2,102</text>
<text transform="translate(719.8,582) rotate(-90)" font-size="11" text-anchor="end">2,6</text>
<text transform="translate(755.5,582) rotate(-90)" font-size="11" text-anchor="end">2,996</text>
<text transform="translate(791.3,582) rotate(-90)" font-size="11" text-anchor="end">3,304</text>
<text transform="translate(827.0,582) rotate(-90)" font-size="11" text-anchor="end">3,495</text>
<text transform="translate(862.8,582) rotate(-90)" font-size="11" text-anchor="end">3,627</text>
<text transform="translate(898.5,582) rotate(-90)" font-size="11" text-anchor="end">3,9</text>
<text transform="translate(934.3,582) rotate(-90)" font-size="11" text-anchor="end">4,198</text>
<text transform="translate(970.0,582) rotate(-90)" font-size="11" text-anchor="end">4,501</text>
<text transform="translate(1005.8,582) rotate(-90)" font-size="11" text-anchor="end">4,902</text>
<text x="684" y="141" font-size="12" font-weight="bold" text-anchor="middle">Тарировка датчика температуры газа</text>
<text x="715" y="620" font-size="12" font-weight="bold" text-anchor="middle">Напряжение АЦП, В</text>
<text transform="translate(378,346.5) rotate(-90)" font-size="12" font-weight="bold" text-anchor="middle" textLength="146">Температура газа, град.С</text>
<g clip-path="url(#pc)">
<polyline points="431,244.9 467,253.0 503,269.5 538,276.0 574,284.0 610,293.0 645,303.8 681,314.8 717,324.6 753,331.6 789,337.9 824,341.6 860,344.5 896,350.8 931,357.8 967,368.0 1003,392.6" fill="none" stroke="#0636d8" stroke-width="1.1"/>
<rect x="425.5" y="239.5" width="11" height="11" fill="#0535d8" stroke="#000" stroke-width="1"/>
<rect x="461.5" y="248.5" width="11" height="11" fill="#0535d8" stroke="#000" stroke-width="1"/>
<rect x="497.5" y="264.5" width="11" height="11" fill="#0535d8" stroke="#000" stroke-width="1"/>
<rect x="532.5" y="270.5" width="11" height="11" fill="#0535d8" stroke="#000" stroke-width="1"/>
<rect x="568.5" y="278.5" width="11" height="11" fill="#0535d8" stroke="#000" stroke-width="1"/>
<rect x="604.5" y="288.5" width="11" height="11" fill="#0535d8" stroke="#000" stroke-width="1"/>
<rect x="639.5" y="298.5" width="11" height="11" fill="#0535d8" stroke="#000" stroke-width="1"/>
<rect x="675.5" y="309.5" width="11" height="11" fill="#0535d8" stroke="#000" stroke-width="1"/>
<rect x="711.5" y="319.5" width="11" height="11" fill="#0535d8" stroke="#000" stroke-width="1"/>
<rect x="747.5" y="326.5" width="11" height="11" fill="#0535d8" stroke="#000" stroke-width="1"/>
<rect x="783.5" y="332.5" width="11" height="11" fill="#0535d8" stroke="#000" stroke-width="1"/>
<rect x="818.5" y="336.5" width="11" height="11" fill="#0535d8" stroke="#000" stroke-width="1"/>
<rect x="854.5" y="339.5" width="11" height="11" fill="#0535d8" stroke="#000" stroke-width="1"/>
<rect x="890.5" y="345.5" width="11" height="11" fill="#0535d8" stroke="#000" stroke-width="1"/>
<rect x="925.5" y="352.5" width="11" height="11" fill="#0535d8" stroke="#000" stroke-width="1"/>
<rect x="961.5" y="362.5" width="11" height="11" fill="#0535d8" stroke="#000" stroke-width="1"/>
<rect x="997.5" y="387.5" width="11" height="11" fill="#0535d8" stroke="#000" stroke-width="1"/>
</g>
<text x="431" y="236" font-size="10" fill="#9a1818" text-anchor="middle" letter-spacing="-0.4">140,00</text>
<text x="503" y="261" font-size="10" fill="#9a1818" text-anchor="middle" letter-spacing="-0.4">110,16</text>
<text x="574" y="275" font-size="10" fill="#9a1818" text-anchor="middle" letter-spacing="-0.4">92,34</text>
<text x="645" y="295" font-size="10" fill="#9a1818" text-anchor="middle" letter-spacing="-0.4">68,40</text>
<text x="717" y="316" font-size="10" fill="#9a1818" text-anchor="middle" letter-spacing="-0.4">42,96</text>
<text x="789" y="329" font-size="10" fill="#9a1818" text-anchor="middle" letter-spacing="-0.4">26,62</text>
<text x="860" y="336" font-size="10" fill="#9a1818" text-anchor="middle" letter-spacing="-0.4">18,57</text>
<text x="931" y="349" font-size="10" fill="#9a1818" text-anchor="middle" letter-spacing="-0.4">2,38</text>
<text x="1003" y="384" font-size="10" fill="#9a1818" text-anchor="middle" letter-spacing="-0.4">-40,00</text>
</g></svg>
<!-- bottom -->
<div class="a" style="left:365px;top:653px;width:647px;height:84px;background:linear-gradient(180deg,#dbe8f9 0,#c0d5f3 40%,#9dbcec 100%)"></div>
<div class="a" style="left:368px;top:656px;width:172px;height:77px;border:1px solid #a0a6ae;box-shadow:1px 1px 0 #fff, inset 1px 1px 0 #fff"></div>
<div class="a" style="left:544px;top:656px;width:187px;height:77px;border:1px solid #a0a6ae;box-shadow:1px 1px 0 #fff, inset 1px 1px 0 #fff"></div>
<div class="a" style="left:735px;top:656px;width:182px;height:77px;border:1px solid #a0a6ae;box-shadow:1px 1px 0 #fff, inset 1px 1px 0 #fff"></div>
<div class="a" style="left:921px;top:656px;width:33px;height:77px;border:1px solid #a0a6ae;box-shadow:1px 1px 0 #fff, inset 1px 1px 0 #fff"></div>
<div class="a" style="left:375px;top:665px;width:16px;height:16px;border-radius:2px;background:linear-gradient(180deg,#5cc25c,#128a16);border:1px solid #fff;box-shadow:0 0 0 1px #c8d8ee"></div>
<svg class="a" style="left:376px;top:666px" width="14" height="14"><path d="M2 7h8M6.5 3l4 4-4 4" fill="none" stroke="#fff" stroke-width="2.2"/></svg>
<div class="a" style="left:375px;top:687px;width:16px;height:16px;border-radius:2px;background:linear-gradient(180deg,#5cc25c,#128a16);border:1px solid #fff;box-shadow:0 0 0 1px #c8d8ee"></div>
<svg class="a" style="left:376px;top:688px" width="14" height="14"><path d="M2 7h8M6.5 3l4 4-4 4" fill="none" stroke="#fff" stroke-width="2.2"/></svg>
<div class="t" style="left:394px;top:668px;font-size:11px;letter-spacing:0.1px">Установить в</div>
<div class="t" style="left:394px;top:689px;font-size:11px">Изменить на</div>
<div class="a" style="left:377px;top:710px;width:13px;height:13px;border:1px solid #8e8f8f;background:linear-gradient(135deg,#dcdcdc,#fafafa);box-shadow:inset 0 0 0 1px #f4f4f4"></div>
<div class="t" style="left:391px;top:711px;font-size:11px;font-weight:bold">%</div>
<div class="a" style="left:403px;top:710px;width:13px;height:13px;border:1px solid #8e8f8f;background:linear-gradient(135deg,#dcdcdc,#fafafa);box-shadow:inset 0 0 0 1px #f4f4f4"></div>
<div class="t" style="left:419px;top:711px;font-size:11px;letter-spacing:0.1px">относит.</div>
<div class="a" style="left:469px;top:661px;width:64px;height:21px;background:#fff;border:1px solid #e4e8ee;border-radius:2px"></div>
<div class="t" style="left:472px;top:666px;font-size:11px">0,000</div>
<div class="a" style="left:518px;top:663px;width:13px;height:9px;border:1px solid #b5b9c0;background:linear-gradient(180deg,#f4f4f4,#dcdcdc)"></div>
<div class="a" style="left:518px;top:672px;width:13px;height:9px;border:1px solid #b5b9c0;background:linear-gradient(180deg,#f4f4f4,#dcdcdc)"></div>
<svg class="a" style="left:518px;top:663px" width="13" height="18"><path d="M3 6.5h7l-3.5-3.5z" fill="#4a5fb8"/><path d="M3 12h7l-3.5 3.5z" fill="#4a5fb8"/></svg>
<div class="a" style="left:469px;top:684px;width:64px;height:21px;background:#fff;border:1px solid #e4e8ee;border-radius:2px"></div>
<div class="t" style="left:472px;top:689px;font-size:11px">0,000</div>
<div class="a" style="left:518px;top:686px;width:13px;height:9px;border:1px solid #b5b9c0;background:linear-gradient(180deg,#f4f4f4,#dcdcdc)"></div>
<div class="a" style="left:518px;top:695px;width:13px;height:9px;border:1px solid #b5b9c0;background:linear-gradient(180deg,#f4f4f4,#dcdcdc)"></div>
<svg class="a" style="left:518px;top:686px" width="13" height="18"><path d="M3 6.5h7l-3.5-3.5z" fill="#4a5fb8"/><path d="M3 12h7l-3.5 3.5z" fill="#4a5fb8"/></svg>
<div class="a" style="left:469px;top:706px;width:64px;height:21px;background:#fff;border:1px solid #e4e8ee;border-radius:2px"></div>
<div class="t" style="left:472px;top:711px;font-size:11px">0,000</div>
<div class="a" style="left:518px;top:708px;width:13px;height:9px;border:1px solid #b5b9c0;background:linear-gradient(180deg,#f4f4f4,#dcdcdc)"></div>
<div class="a" style="left:518px;top:717px;width:13px;height:9px;border:1px solid #b5b9c0;background:linear-gradient(180deg,#f4f4f4,#dcdcdc)"></div>
<svg class="a" style="left:518px;top:708px" width="13" height="18"><path d="M3 6.5h7l-3.5-3.5z" fill="#4a5fb8"/><path d="M3 12h7l-3.5 3.5z" fill="#4a5fb8"/></svg>
<div class="a" style="left:552px;top:673px;width:82px;height:12px;background:#e6e8ea;border:1px solid #d0d4d8;border-bottom-color:#fff;border-right-color:#fff"></div>
<div class="a" style="left:552px;top:701px;width:82px;height:12px;background:#e6e8ea;border:1px solid #d0d4d8;border-bottom-color:#fff;border-right-color:#fff"></div>
<svg class="a" style="left:550px;top:670px" width="60" height="48">
<path d="M2.5 2.5h7v10l-3.5 3-3.5-3z" fill="#f2f2f2" stroke="#8a8a8a"/>
<path d="M34.5 30.5h7v10l-3.5 3-3.5-3z" fill="#f2f2f2" stroke="#8a8a8a"/>
</svg>
<div class="a" style="left:642px;top:662px;width:83px;height:67px;border:1px solid #8a8c90;border-radius:4px;background:linear-gradient(180deg,#f8f8f8,#e4e4e4 50%,#d4d4d4 51%,#e8e8e8)"></div>
<svg class="a" style="left:648px;top:667px" width="72" height="58">
<rect x="0.5" y="0.5" width="70" height="56" fill="#fff" stroke="#555"/>
<path d="M7.5 0v57M14.5 0v57M21.5 0v57M28.5 0v57M35.5 0v57M42.5 0v57M49.5 0v57M56.5 0v57M63.5 0v57M0 7.5h71M0 14.5h71M0 21.5h71M0 28.5h71M0 35.5h71M0 42.5h71M0 49.5h71" stroke="#555" stroke-width="1"/>
<path d="M4 4.2C12 4.2 16 4.3 19.3 4.7C27 5.5 31 6.5 35.8 8.6C41 11 45 14.5 48.5 18.7C51.5 22 54 25.5 56.1 28.9C60 35 64 44 67.5 53" fill="none" stroke="#1010e0" stroke-width="1.2"/>
<path d="M4 53.8C14 53.8 22 53 28 51.7C36 50 43 46 48.5 40.3C52 36.5 55.5 32 58.6 26.3C62 20 65 12 67.5 4.7" fill="none" stroke="#ff1010" stroke-width="1.2"/>
</svg>
<div class="a" style="left:741px;top:665px;width:13px;height:13px;border:1px solid #8e8f8f;background:linear-gradient(135deg,#dcdcdc,#fafafa);box-shadow:inset 0 0 0 1px #f4f4f4"></div><svg class="a" style="left:741px;top:665px" width="13" height="13"><path d="M3 6.5l2.5 3L10 2.5" fill="none" stroke="#3050a0" stroke-width="1.8"/></svg>
<div class="a" style="left:741px;top:681px;width:13px;height:13px;border:1px solid #8e8f8f;background:linear-gradient(135deg,#dcdcdc,#fafafa);box-shadow:inset 0 0 0 1px #f4f4f4"></div>
<div class="a" style="left:741px;top:697px;width:13px;height:13px;border:1px solid #8e8f8f;background:linear-gradient(135deg,#dcdcdc,#fafafa);box-shadow:inset 0 0 0 1px #f4f4f4"></div>
<div class="a" style="left:741px;top:714px;width:13px;height:13px;border:1px solid #c0c8d2;background:linear-gradient(135deg,#e8eef6,#f4f7fb);box-shadow:inset 0 0 0 1px #f4f4f4"></div>
<div class="t" style="left:760px;top:667px;font-size:11px;letter-spacing:0.1px">2D - отображать все точки</div>
<div class="t" style="left:760px;top:682px;font-size:11px;letter-spacing:-0.1px">3D - следить за мышью</div>
<div class="t" style="left:760px;top:698px;font-size:11px;letter-spacing:-0.05px">3D - изм. соседние точки</div>
<div class="t" style="left:760px;top:714px;font-size:11px;letter-spacing:-0.15px;color:#f4f8fc;text-shadow:1px 1px 0 #a8b8cc">2D - отменить ZOOM</div>
<div class="a" style="left:893px;top:696px;width:22px;height:20px;background:linear-gradient(180deg,#d6e5f8,#aecaf0);box-shadow:inset 0 0 0 2px rgba(255,255,255,.35)"></div>
<svg class="a" style="left:895px;top:699px" width="16" height="14"><rect x="0" y="0" width="16" height="14" fill="#0a4cc0"/><g fill="#fff"><rect x="1" y="2" width="3" height="3"/><rect x="5" y="2" width="3" height="3"/><rect x="9" y="2" width="3" height="3"/><rect x="13" y="2" width="2" height="3"/><rect x="1" y="6" width="3" height="3"/><rect x="5" y="6" width="3" height="3"/><rect x="9" y="6" width="3" height="3"/><rect x="13" y="6" width="2" height="3"/><rect x="1" y="10" width="3" height="3"/><rect x="5" y="10" width="3" height="3"/><rect x="9" y="10" width="3" height="3"/><rect x="13" y="10" width="2" height="3"/></g></svg>
<div class="a" style="left:928px;top:670px;width:20px;height:20px;border:1px solid #707070;border-radius:3px;background:linear-gradient(180deg,#f2f2f2,#ebebeb 50%,#dddddd 51%,#cfcfcf)"></div>
<div class="t" style="left:934px;top:675px;font-size:11px">X</div>
<div class="a" style="left:928px;top:702px;width:20px;height:20px;border:1px solid #c0c4c8;border-radius:3px;background:linear-gradient(180deg,#f6f6f6,#f0f0f0)"></div>
<div class="t" style="left:934px;top:707px;font-size:11px;color:#8a8a8a">Z</div>

<!-- status -->
<div class="a" style="left:8px;top:740px;width:1008px;height:20px;border-top:1px solid #7aa0d8;background:linear-gradient(180deg,#b4cff4 0,#a6c4f0 35%,#88ace3 55%,#7fa5df 90%,#8cb0e4 100%)"></div>
<svg class="a" style="left:1002px;top:745px" width="14" height="14"><g fill="#c8daf4"><rect x="8" y="1" width="2" height="2"/><rect x="4" y="5" width="2" height="2"/><rect x="8" y="5" width="2" height="2"/><rect x="0" y="9" width="2" height="2"/><rect x="4" y="9" width="2" height="2"/><rect x="8" y="9" width="2" height="2"/></g></svg>
<div class="t" style="left:12px;top:745px;font-size:12px">Микас-12</div>
<div class="a" style="left:208px;top:743px;width:1px;height:16px;background:#dfe9f8"></div>
<div class="a" style="left:358px;top:743px;width:1px;height:16px;background:#dfe9f8"></div>
<div class="t" style="left:210px;top:745px;font-size:12px;letter-spacing:-0.6px">9001_01</div>
</body></html>
